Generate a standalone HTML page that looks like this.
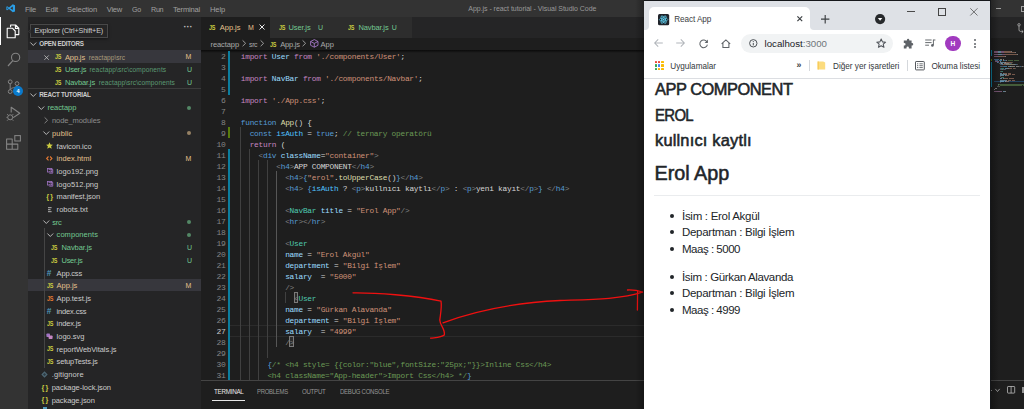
<!DOCTYPE html>
<html lang="tr"><head><meta charset="utf-8"><title>React App</title>
<style>
html,body{margin:0;padding:0;}
body{width:1024px;height:409px;overflow:hidden;position:relative;background:#1e1e1e;font-family:"Liberation Sans", sans-serif;}
body>div,body>span,body>svg{position:absolute;}
span{white-space:pre;}
svg{overflow:visible;}
</style></head><body>
<div style="left:0.00px;top:0.00px;width:1024.00px;height:17.30px;background:#333333;"></div>
<div style="left:0.00px;top:17.30px;width:28.00px;height:391.70px;background:#333333;"></div>
<div style="left:28.00px;top:17.30px;width:173.10px;height:391.70px;background:#252526;"></div>
<div style="left:201.10px;top:17.30px;width:822.90px;height:20.40px;background:#252526;"></div>
<svg style="left:5.60px;top:4.20px;" width="9.30" height="8.60" viewBox="0 0 10 10" preserveAspectRatio="none"><path d="M7.3 0.3 L3.2 4.1 1.3 2.7 0.4 3.1 0.4 6.9 1.3 7.3 3.2 5.9 7.3 9.7 9.7 8.6 9.7 1.4 Z M7.3 3 L7.3 7 4.6 5 Z M1.4 3.9 L2.5 5 1.4 6.1 Z" fill="#2a9ee6" fill-rule="evenodd"/></svg>
<span style="left:25.00px;top:5px;font-size:7.6px;line-height:9px;color:#a0a0a0;letter-spacing:-0.312px;">File</span>
<span style="left:45.50px;top:5px;font-size:7.6px;line-height:9px;color:#a0a0a0;letter-spacing:-0.148px;">Edit</span>
<span style="left:67.00px;top:5px;font-size:7.6px;line-height:9px;color:#a0a0a0;letter-spacing:-0.139px;">Selection</span>
<span style="left:106.75px;top:5px;font-size:7.6px;line-height:9px;color:#a0a0a0;letter-spacing:-0.270px;">View</span>
<span style="left:132.00px;top:5px;font-size:7.6px;line-height:9px;color:#a0a0a0;letter-spacing:-0.342px;transform:scaleX(0.9253);transform-origin:0 0;">Go</span>
<span style="left:150.75px;top:5px;font-size:7.6px;line-height:9px;color:#a0a0a0;letter-spacing:-0.342px;transform:scaleX(0.9488);transform-origin:0 0;">Run</span>
<span style="left:173.00px;top:5px;font-size:7.6px;line-height:9px;color:#a0a0a0;letter-spacing:-0.213px;">Terminal</span>
<span style="left:210.00px;top:5px;font-size:7.6px;line-height:9px;color:#a0a0a0;letter-spacing:-0.156px;">Help</span>
<span style="left:468.30px;top:5px;font-size:7.0px;line-height:7px;color:#9a9a9a;letter-spacing:-0.039px;">App.js - react tutorial - Visual Studio Code</span>
<div style="left:0.00px;top:17.30px;width:1.20px;height:27.70px;background:#ffffff;"></div>
<svg style="left:5.90px;top:23.50px;" width="14.00" height="15.00" viewBox="0 0 14 15"><path d="M4.6 3.2 V1 H9.6 L12.8 4.2 V10.6 H9.2 M9.4 1 V4.4 H12.8" fill="none" stroke="#ffffff" stroke-width="1.1" stroke-linejoin="round"/><path d="M1.2 4.2 H6.4 L9.2 7 V13.8 H1.2 Z" fill="none" stroke="#ffffff" stroke-width="1.1" stroke-linejoin="round"/></svg>
<svg style="left:7.00px;top:51.50px;" width="14.00" height="15.00" viewBox="0 0 14 15"><circle cx="8.6" cy="5.4" r="4.1" fill="none" stroke="#858585" stroke-width="1.1"/><path d="M5.8 8.6 L1 14" stroke="#858585" stroke-width="1.2" fill="none"/></svg>
<svg style="left:7.00px;top:79.00px;" width="14.00" height="16.00" viewBox="0 0 14 16"><circle cx="3.2" cy="2.8" r="1.9" fill="none" stroke="#858585" stroke-width="1"/><circle cx="3.2" cy="12.6" r="1.9" fill="none" stroke="#858585" stroke-width="1"/><circle cx="10" cy="4.6" r="1.9" fill="none" stroke="#858585" stroke-width="1"/><path d="M3.2 4.7 V10.7 M10 6.5 C10 9 3.2 8.4 3.2 10.7" fill="none" stroke="#858585" stroke-width="1"/></svg>
<div style="left:13px;top:86.3px;width:10px;height:10px;border-radius:5px;background:#0a7acc;"></div>
<span style="left:16.50px;top:88px;font-size:5.6px;line-height:6px;color:#ffffff;font-weight:700;">4</span>
<svg style="left:6.30px;top:106.40px;" width="15.00" height="16.00" viewBox="0 0 15 16"><path d="M5.2 6.5 V1.2 L13.8 7.2 L7.6 11.4" fill="none" stroke="#858585" stroke-width="1.1" stroke-linejoin="round"/><circle cx="4.2" cy="11.3" r="2.5" fill="none" stroke="#858585" stroke-width="1"/><path d="M1 8 L2.4 9.4 M7.4 8 L6 9.4 M0.4 11.4 H1.7 M6.7 11.4 H8 M1 14.8 L2.4 13.3 M7.4 14.8 L6 13.3" stroke="#858585" stroke-width="0.8" fill="none"/></svg>
<svg style="left:6.40px;top:134.60px;" width="15.00" height="15.00" viewBox="0 0 15 15"><path d="M0.6 3.9 H6.2 V9.1 H11.8 V14.3 H0.6 Z M0.6 9.1 H6.2 V14.3" fill="none" stroke="#858585" stroke-width="1.05" stroke-linejoin="round"/><rect x="8.8" y="0.6" width="5.6" height="5.4" fill="none" stroke="#858585" stroke-width="1.05"/></svg>
<span style="left:183.50px;top:22px;font-size:9px;line-height:10px;color:#c5c5c5;font-weight:700;">···</span>
<div style="left:29.6px;top:24px;width:78.6px;height:14px;background:#252526;border:0.6px solid #484848;box-sizing:border-box;box-shadow:0 1px 3px rgba(0,0,0,.45);"></div>
<svg style="left:27.60px;top:28.60px;" width="2.60" height="5.00" viewBox="0 0 2.6 5"><path d="M2.6 0.2 L0.5 2.5 L2.6 4.8" fill="#252526" stroke="#484848" stroke-width="0.5"/></svg>
<span style="left:34.50px;top:26px;font-size:7.2px;line-height:9px;color:#cccccc;letter-spacing:-0.165px;">Explorer (Ctrl+Shift+E)</span>
<svg style="left:30.20px;top:41.05px;" width="6.60" height="6.00" viewBox="0 0 6.6 6"><path d="M0.4 1.5 L3.3 4.5 L6.2 1.5" fill="none" stroke="#c5c5c5" stroke-width="0.9"/></svg>
<span style="left:39.25px;top:40px;font-size:6.3px;line-height:7px;color:#cccccc;font-weight:700;letter-spacing:-0.249px;">OPEN EDITORS</span>
<div style="left:28.00px;top:50.20px;width:173.10px;height:12.70px;background:#37373d;"></div>
<svg style="left:43.70px;top:54.55px;" width="5.20" height="5.20" viewBox="0 0 5.2 5.2"><path d="M0.4 0.4 L4.8 4.8 M4.8 0.4 L0.4 4.8" stroke="#cccccc" stroke-width="0.75"/></svg>
<span style="left:54.50px;top:53px;font-size:7.0px;line-height:7px;color:#cbcb41;font-weight:700;letter-spacing:-0.315px;transform:scaleX(0.7816);transform-origin:0 0;">JS</span>
<span style="left:65.00px;top:53px;font-size:7.5px;line-height:9px;color:#e2c08d;letter-spacing:-0.143px;">App.js</span>
<span style="left:88.75px;top:54px;font-size:6.6px;line-height:7px;color:#a89a7c;letter-spacing:-0.004px;">reactapp\src</span>
<span style="left:185.50px;top:53px;font-size:7.0px;line-height:7px;color:#e2c08d;">M</span>
<span style="left:54.50px;top:66px;font-size:7.0px;line-height:7px;color:#cbcb41;font-weight:700;letter-spacing:-0.315px;transform:scaleX(0.7816);transform-origin:0 0;">JS</span>
<span style="left:65.00px;top:65px;font-size:7.5px;line-height:9px;color:#73c991;letter-spacing:-0.239px;">User.js</span>
<span style="left:89.50px;top:66px;font-size:6.6px;line-height:7px;color:#5c9a73;letter-spacing:0.118px;">reactapp\src\components</span>
<span style="left:187.00px;top:66px;font-size:7.0px;line-height:7px;color:#73c991;">U</span>
<span style="left:54.50px;top:79px;font-size:7.0px;line-height:7px;color:#cbcb41;font-weight:700;letter-spacing:-0.315px;transform:scaleX(0.7816);transform-origin:0 0;">JS</span>
<span style="left:65.00px;top:78px;font-size:7.5px;line-height:9px;color:#73c991;letter-spacing:-0.141px;">Navbar.js</span>
<span style="left:98.75px;top:79px;font-size:6.6px;line-height:7px;color:#5c9a73;letter-spacing:0.096px;">reactapp\src\components</span>
<span style="left:187.00px;top:79px;font-size:7.0px;line-height:7px;color:#73c991;">U</span>
<div style="left:28.00px;top:88.30px;width:173.10px;height:0.60px;background:#3c3c3c;"></div>
<svg style="left:30.20px;top:91.85px;" width="6.60" height="6.00" viewBox="0 0 6.6 6"><path d="M0.4 1.5 L3.3 4.5 L6.2 1.5" fill="none" stroke="#c5c5c5" stroke-width="0.9"/></svg>
<span style="left:39.25px;top:91px;font-size:6.3px;line-height:7px;color:#cccccc;font-weight:700;letter-spacing:-0.279px;">REACT TUTORIAL</span>
<svg style="left:38.20px;top:104.55px;" width="6.60" height="6.00" viewBox="0 0 6.6 6"><path d="M0.4 1.5 L3.3 4.5 L6.2 1.5" fill="none" stroke="#c5c5c5" stroke-width="0.9"/></svg>
<span style="left:47.50px;top:103px;font-size:7.5px;line-height:9px;color:#73c991;letter-spacing:-0.055px;">reactapp</span>
<div style="left:186.8px;top:105.95px;width:4px;height:4px;border-radius:2px;background:#73c991;opacity:.6"></div>
<svg style="left:42.80px;top:117.35px;" width="6.00" height="6.60" viewBox="0 0 6 6.6"><path d="M1.6 0.4 L4.6 3.3 L1.6 6.2" fill="none" stroke="#8c8c8c" stroke-width="0.9"/></svg>
<span style="left:52.00px;top:116px;font-size:7.5px;line-height:9px;color:#8c8c8c;letter-spacing:-0.060px;">node_modules</span>
<svg style="left:42.50px;top:129.95px;" width="6.60" height="6.00" viewBox="0 0 6.6 6"><path d="M0.4 1.5 L3.3 4.5 L6.2 1.5" fill="none" stroke="#c5c5c5" stroke-width="0.9"/></svg>
<span style="left:52.00px;top:129px;font-size:7.5px;line-height:9px;color:#e2c08d;letter-spacing:0.148px;">public</span>
<div style="left:186.8px;top:131.35px;width:4px;height:4px;border-radius:2px;background:#e2c08d;opacity:.6"></div>
<svg style="left:46.30px;top:142.45px;" width="7.00" height="7.00" viewBox="0 0 7 7"><path d="M3.5 0.3 L4.5 2.5 L6.9 2.7 L5.1 4.3 L5.7 6.7 L3.5 5.4 L1.3 6.7 L1.9 4.3 L0.1 2.7 L2.5 2.5 Z" fill="#cbcb41"/></svg>
<span style="left:56.60px;top:142px;font-size:7.5px;line-height:9px;color:#cccccc;letter-spacing:-0.040px;">favicon.ico</span>
<svg style="left:46.20px;top:155.65px;" width="6.60" height="4.80" viewBox="0 0 6.6 4.8"><path d="M2.5 0.5 L0.7 2.4 L2.5 4.3 M4.1 0.5 L5.9 2.4 L4.1 4.3" fill="none" stroke="#e37933" stroke-width="1.15"/></svg>
<span style="left:56.60px;top:154px;font-size:7.5px;line-height:9px;color:#e2c08d;letter-spacing:0.046px;">index.html</span>
<span style="left:185.50px;top:155px;font-size:7.0px;line-height:7px;color:#e2c08d;">M</span>
<svg style="left:46.50px;top:168.15px;" width="6.20" height="5.70" viewBox="0 0 7 6.4"><rect x="0.5" y="0.5" width="5" height="4" fill="none" stroke="#a074c4" stroke-width="0.9"/><path d="M1.8 1.6 H6.5 V5.9 H2.6" fill="none" stroke="#a074c4" stroke-width="0.9"/><path d="M2.4 4.6 L3.8 3 L5 4.2 L6 3.4" fill="none" stroke="#a074c4" stroke-width="0.7"/></svg>
<span style="left:56.60px;top:167px;font-size:7.5px;line-height:9px;color:#cccccc;letter-spacing:0.032px;">logo192.png</span>
<svg style="left:46.50px;top:180.85px;" width="6.20" height="5.70" viewBox="0 0 7 6.4"><rect x="0.5" y="0.5" width="5" height="4" fill="none" stroke="#a074c4" stroke-width="0.9"/><path d="M1.8 1.6 H6.5 V5.9 H2.6" fill="none" stroke="#a074c4" stroke-width="0.9"/><path d="M2.4 4.6 L3.8 3 L5 4.2 L6 3.4" fill="none" stroke="#a074c4" stroke-width="0.7"/></svg>
<span style="left:56.60px;top:180px;font-size:7.5px;line-height:9px;color:#cccccc;letter-spacing:0.032px;">logo512.png</span>
<span style="left:46.30px;top:192px;font-size:7.2px;line-height:9px;color:#cbcb41;font-weight:700;letter-spacing:1.1px;">{}</span>
<span style="left:56.60px;top:192px;font-size:7.5px;line-height:9px;color:#cccccc;letter-spacing:-0.061px;">manifest.json</span>
<svg style="left:48.20px;top:206.55px;" width="4.00" height="5.40" viewBox="0 0 4 5.4"><path d="M0 0.7 H3.6 M0 2.7 H2.6 M0 4.7 H3.6" stroke="#c5c5c5" stroke-width="0.9"/></svg>
<span style="left:56.60px;top:205px;font-size:7.5px;line-height:9px;color:#cccccc;letter-spacing:0.054px;">robots.txt</span>
<svg style="left:42.50px;top:218.85px;" width="6.60" height="6.00" viewBox="0 0 6.6 6"><path d="M0.4 1.5 L3.3 4.5 L6.2 1.5" fill="none" stroke="#c5c5c5" stroke-width="0.9"/></svg>
<span style="left:52.20px;top:218px;font-size:7.5px;line-height:9px;color:#73c991;letter-spacing:-0.233px;">src</span>
<div style="left:186.8px;top:220.25px;width:4px;height:4px;border-radius:2px;background:#73c991;opacity:.6"></div>
<svg style="left:47.30px;top:231.55px;" width="6.60" height="6.00" viewBox="0 0 6.6 6"><path d="M0.4 1.5 L3.3 4.5 L6.2 1.5" fill="none" stroke="#c5c5c5" stroke-width="0.9"/></svg>
<span style="left:56.60px;top:230px;font-size:7.5px;line-height:9px;color:#73c991;letter-spacing:0.054px;">components</span>
<div style="left:186.8px;top:232.95px;width:4px;height:4px;border-radius:2px;background:#73c991;opacity:.6"></div>
<span style="left:51.00px;top:244px;font-size:7.0px;line-height:7px;color:#cbcb41;font-weight:700;letter-spacing:-0.315px;transform:scaleX(0.7816);transform-origin:0 0;">JS</span>
<span style="left:61.50px;top:243px;font-size:7.5px;line-height:9px;color:#73c991;letter-spacing:-0.085px;">Navbar.js</span>
<span style="left:187.00px;top:244px;font-size:7.0px;line-height:7px;color:#73c991;">U</span>
<span style="left:51.00px;top:257px;font-size:7.0px;line-height:7px;color:#cbcb41;font-weight:700;letter-spacing:-0.315px;transform:scaleX(0.7816);transform-origin:0 0;">JS</span>
<span style="left:61.50px;top:256px;font-size:7.5px;line-height:9px;color:#73c991;letter-spacing:-0.275px;">User.js</span>
<span style="left:187.00px;top:257px;font-size:7.0px;line-height:7px;color:#73c991;">U</span>
<span style="left:46.80px;top:268px;font-size:8.4px;line-height:10px;color:#519aba;font-weight:700;">#</span>
<span style="left:56.60px;top:269px;font-size:7.5px;line-height:9px;color:#cccccc;letter-spacing:-0.184px;">App.css</span>
<div style="left:28.00px;top:278.80px;width:173.10px;height:12.70px;background:#37373d;"></div>
<span style="left:46.50px;top:282px;font-size:7.0px;line-height:7px;color:#cbcb41;font-weight:700;letter-spacing:-0.315px;transform:scaleX(0.7816);transform-origin:0 0;">JS</span>
<span style="left:56.60px;top:281px;font-size:7.5px;line-height:9px;color:#e2c08d;letter-spacing:-0.027px;">App.js</span>
<span style="left:185.50px;top:282px;font-size:7.0px;line-height:7px;color:#e2c08d;">M</span>
<span style="left:46.50px;top:295px;font-size:7.0px;line-height:7px;color:#e37933;font-weight:700;letter-spacing:-0.315px;transform:scaleX(0.7816);transform-origin:0 0;">JS</span>
<span style="left:56.60px;top:294px;font-size:7.5px;line-height:9px;color:#cccccc;letter-spacing:-0.057px;">App.test.js</span>
<span style="left:46.80px;top:306px;font-size:8.4px;line-height:10px;color:#519aba;font-weight:700;">#</span>
<span style="left:56.60px;top:307px;font-size:7.5px;line-height:9px;color:#cccccc;letter-spacing:-0.163px;">index.css</span>
<span style="left:46.50px;top:320px;font-size:7.0px;line-height:7px;color:#cbcb41;font-weight:700;letter-spacing:-0.315px;transform:scaleX(0.7816);transform-origin:0 0;">JS</span>
<span style="left:56.60px;top:319px;font-size:7.5px;line-height:9px;color:#cccccc;letter-spacing:-0.130px;">index.js</span>
<svg style="left:46.30px;top:333.35px;" width="7.00" height="6.40" viewBox="0 0 7 6.4"><rect x="0.4" y="0.4" width="3.6" height="3.6" rx="0.8" fill="#a074c4"/><rect x="2.6" y="2.4" width="4" height="3.6" rx="0.8" fill="#c586c0"/></svg>
<span style="left:56.60px;top:332px;font-size:7.5px;line-height:9px;color:#cccccc;letter-spacing:-0.005px;">logo.svg</span>
<span style="left:46.50px;top:345px;font-size:7.0px;line-height:7px;color:#cbcb41;font-weight:700;letter-spacing:-0.315px;transform:scaleX(0.7816);transform-origin:0 0;">JS</span>
<span style="left:56.60px;top:345px;font-size:7.5px;line-height:9px;color:#cccccc;letter-spacing:-0.033px;">reportWebVitals.js</span>
<span style="left:46.50px;top:358px;font-size:7.0px;line-height:7px;color:#cbcb41;font-weight:700;letter-spacing:-0.315px;transform:scaleX(0.7816);transform-origin:0 0;">JS</span>
<span style="left:56.60px;top:357px;font-size:7.5px;line-height:9px;color:#cccccc;letter-spacing:-0.174px;">setupTests.js</span>
<svg style="left:41.20px;top:370.75px;" width="7.00" height="7.00" viewBox="0 0 7 7"><path d="M3.5 0.3 L6.7 3.5 L3.5 6.7 L0.3 3.5 Z" fill="#4d6673"/><path d="M3.5 2 L5 3.5 L3.5 5 L2 3.5 Z" fill="#2c3a42"/></svg>
<span style="left:51.70px;top:370px;font-size:7.5px;line-height:9px;color:#cccccc;letter-spacing:0.124px;">.gitignore</span>
<span style="left:41.60px;top:383px;font-size:7.2px;line-height:9px;color:#cbcb41;font-weight:700;letter-spacing:1.1px;">{}</span>
<span style="left:51.70px;top:383px;font-size:7.5px;line-height:9px;color:#cccccc;letter-spacing:-0.044px;">package-lock.json</span>
<span style="left:41.60px;top:395px;font-size:7.2px;line-height:9px;color:#cbcb41;font-weight:700;letter-spacing:1.1px;">{}</span>
<span style="left:51.70px;top:396px;font-size:7.5px;line-height:9px;color:#cccccc;letter-spacing:-0.096px;">package.json</span>
<div style="left:44.00px;top:228.00px;width:0.60px;height:139.70px;background:#454545;"></div>
<div style="left:42.50px;top:407.00px;width:4.00px;height:2.00px;background:#519aba;"></div>
<div style="left:201.10px;top:17.30px;width:68.65px;height:20.40px;background:#1e1e1e;"></div>
<div style="left:270.20px;top:17.30px;width:68.50px;height:20.40px;background:#2d2d2d;"></div>
<div style="left:339.40px;top:17.30px;width:72.70px;height:20.40px;background:#2d2d2d;"></div>
<span style="left:209.00px;top:24px;font-size:7.0px;line-height:7px;color:#cbcb41;font-weight:700;letter-spacing:-0.315px;transform:scaleX(0.7816);transform-origin:0 0;">JS</span>
<span style="left:219.75px;top:23px;font-size:7.5px;line-height:9px;color:#e2c08d;letter-spacing:-0.018px;">App.js</span>
<span style="left:248.00px;top:24px;font-size:7.0px;line-height:7px;color:#e2c08d;">M</span>
<svg style="left:258.60px;top:23.80px;" width="6.00" height="6.00" viewBox="0 0 6 6"><path d="M0.5 0.5 L5.5 5.5 M5.5 0.5 L0.5 5.5" stroke="#f0f0f0" stroke-width="0.95"/></svg>
<span style="left:278.50px;top:24px;font-size:7.0px;line-height:7px;color:#cbcb41;font-weight:700;letter-spacing:-0.315px;transform:scaleX(0.7816);transform-origin:0 0;">JS</span>
<span style="left:288.50px;top:23px;font-size:7.5px;line-height:9px;color:#73c991;letter-spacing:-0.132px;">User.js</span>
<span style="left:318.00px;top:24px;font-size:7.0px;line-height:7px;color:#73c991;">U</span>
<span style="left:348.00px;top:24px;font-size:7.0px;line-height:7px;color:#cbcb41;font-weight:700;letter-spacing:-0.315px;transform:scaleX(0.7816);transform-origin:0 0;">JS</span>
<span style="left:358.50px;top:23px;font-size:7.5px;line-height:9px;color:#73c991;letter-spacing:-0.141px;">Navbar.js</span>
<span style="left:391.75px;top:24px;font-size:7.0px;line-height:7px;color:#73c991;">U</span>
<span style="left:210.50px;top:40px;font-size:7.5px;line-height:9px;color:#a9a9a9;letter-spacing:-0.086px;">reactapp</span>
<svg style="left:240.90px;top:40.20px;" width="6.00" height="6.60" viewBox="0 0 6 6.6"><path d="M1.6 0.4 L4.6 3.3 L1.6 6.2" fill="none" stroke="#a9a9a9" stroke-width="0.9"/></svg>
<span style="left:249.00px;top:40px;font-size:7.5px;line-height:9px;color:#a9a9a9;letter-spacing:-0.337px;transform:scaleX(0.9179);transform-origin:0 0;">src</span>
<svg style="left:258.90px;top:40.20px;" width="6.00" height="6.60" viewBox="0 0 6 6.6"><path d="M1.6 0.4 L4.6 3.3 L1.6 6.2" fill="none" stroke="#a9a9a9" stroke-width="0.9"/></svg>
<span style="left:269.75px;top:41px;font-size:7.0px;line-height:7px;color:#cbcb41;font-weight:700;letter-spacing:-0.315px;transform:scaleX(0.7816);transform-origin:0 0;">JS</span>
<span style="left:280.25px;top:40px;font-size:7.5px;line-height:9px;color:#a9a9a9;letter-spacing:-0.227px;">App.js</span>
<svg style="left:301.40px;top:40.20px;" width="6.00" height="6.60" viewBox="0 0 6 6.6"><path d="M1.6 0.4 L4.6 3.3 L1.6 6.2" fill="none" stroke="#a9a9a9" stroke-width="0.9"/></svg>
<svg style="left:309.50px;top:39.10px;" width="8.60" height="8.80" viewBox="0 0 8.6 8.8"><path d="M4.3 0.6 L8 2.5 V6.3 L4.3 8.2 L0.6 6.3 V2.5 Z M0.6 2.5 L4.3 4.4 L8 2.5 M4.3 4.4 V8.2" fill="none" stroke="#b180d7" stroke-width="0.8" stroke-linejoin="round"/></svg>
<span style="left:320.50px;top:40px;font-size:7.5px;line-height:9px;color:#a9a9a9;letter-spacing:0.047px;">App</span>
<div style="left:201.1px;top:50.4px;width:443.4px;height:3px;background:linear-gradient(#000000aa,#00000000);"></div>
<div style="left:229.50px;top:325.10px;width:414.50px;height:0.70px;background:#2b2b2b;"></div>
<div style="left:229.50px;top:335.55px;width:414.50px;height:0.70px;background:#2b2b2b;"></div>
<div style="left:228.10px;top:50.60px;width:1.80px;height:43.92px;background:#0c7d9d;"></div>
<div style="left:228.10px;top:127.46px;width:1.80px;height:10.98px;background:#587c0c;"></div>
<div style="left:228.10px;top:149.42px;width:1.80px;height:252.54px;background:#0c7d9d;"></div>
<div style="left:240.30px;top:127.46px;width:0.60px;height:274.50px;background:#404040;"></div>
<div style="left:249.17px;top:149.42px;width:0.60px;height:252.54px;background:#404040;"></div>
<div style="left:258.05px;top:160.40px;width:0.60px;height:241.56px;background:#404040;"></div>
<div style="left:266.92px;top:160.40px;width:0.60px;height:197.64px;background:#404040;"></div>
<div style="left:275.80px;top:171.38px;width:0.60px;height:175.68px;background:#565656;"></div>
<div style="left:284.67px;top:292.16px;width:0.60px;height:10.98px;background:#404040;"></div>
<div style="left:293.74px;top:292.36px;width:4.44px;height:10.38px;border:0.6px solid #7a7a7a;box-sizing:border-box;background:#ffffff10;"></div>
<div style="left:289.31px;top:336.28px;width:4.44px;height:10.38px;border:0.6px solid #7a7a7a;box-sizing:border-box;background:#ffffff10;"></div>
<span style="left:220.96px;top:52px;font-size:8.0px;line-height:9px;color:#858585;font-family:'Liberation Mono', monospace;letter-spacing:-0.364px;">2</span>
<span style="left:240.80px;top:53px;font-size:7.8px;line-height:8px;color:#d4d4d4;font-family:'Liberation Mono', monospace;letter-spacing:-0.244px;"><span style="color:#c586c0">import</span><span style="color:#9cdcfe"> User</span><span style="color:#c586c0"> from</span><span style="color:#ce9178"> './components/User'</span><span style="color:#d4d4d4">;</span></span>
<span style="left:220.96px;top:63px;font-size:8.0px;line-height:9px;color:#858585;font-family:'Liberation Mono', monospace;letter-spacing:-0.364px;">3</span>
<span style="left:220.96px;top:74px;font-size:8.0px;line-height:9px;color:#858585;font-family:'Liberation Mono', monospace;letter-spacing:-0.364px;">4</span>
<span style="left:240.80px;top:75px;font-size:7.8px;line-height:8px;color:#d4d4d4;font-family:'Liberation Mono', monospace;letter-spacing:-0.244px;"><span style="color:#c586c0">import</span><span style="color:#9cdcfe"> NavBar</span><span style="color:#c586c0"> from</span><span style="color:#ce9178"> './components/Navbar'</span><span style="color:#d4d4d4">;</span></span>
<span style="left:220.96px;top:85px;font-size:8.0px;line-height:9px;color:#858585;font-family:'Liberation Mono', monospace;letter-spacing:-0.364px;">5</span>
<span style="left:220.96px;top:96px;font-size:8.0px;line-height:9px;color:#858585;font-family:'Liberation Mono', monospace;letter-spacing:-0.364px;">6</span>
<span style="left:240.80px;top:97px;font-size:7.8px;line-height:8px;color:#d4d4d4;font-family:'Liberation Mono', monospace;letter-spacing:-0.244px;"><span style="color:#c586c0">import</span><span style="color:#ce9178"> './App.css'</span><span style="color:#d4d4d4">;</span></span>
<span style="left:220.96px;top:107px;font-size:8.0px;line-height:9px;color:#858585;font-family:'Liberation Mono', monospace;letter-spacing:-0.364px;">7</span>
<span style="left:220.96px;top:118px;font-size:8.0px;line-height:9px;color:#858585;font-family:'Liberation Mono', monospace;letter-spacing:-0.364px;">8</span>
<span style="left:240.80px;top:119px;font-size:7.8px;line-height:8px;color:#d4d4d4;font-family:'Liberation Mono', monospace;letter-spacing:-0.244px;"><span style="color:#569cd6">function</span><span style="color:#dcdcaa"> App</span><span style="color:#d4d4d4">() {</span></span>
<span style="left:220.96px;top:129px;font-size:8.0px;line-height:9px;color:#858585;font-family:'Liberation Mono', monospace;letter-spacing:-0.364px;">9</span>
<span style="left:249.67px;top:130px;font-size:7.8px;line-height:8px;color:#d4d4d4;font-family:'Liberation Mono', monospace;letter-spacing:-0.244px;"><span style="color:#569cd6">const</span><span style="color:#4fc1ff"> isAuth</span><span style="color:#d4d4d4"> = </span><span style="color:#569cd6">true</span><span style="color:#d4d4d4">; </span><span style="color:#6a9955">// ternary operatörü</span></span>
<span style="left:216.53px;top:140px;font-size:8.0px;line-height:9px;color:#858585;font-family:'Liberation Mono', monospace;letter-spacing:-0.364px;">10</span>
<span style="left:249.67px;top:141px;font-size:7.8px;line-height:8px;color:#d4d4d4;font-family:'Liberation Mono', monospace;letter-spacing:-0.244px;"><span style="color:#c586c0">return</span><span style="color:#d4d4d4"> (</span></span>
<span style="left:216.53px;top:151px;font-size:8.0px;line-height:9px;color:#858585;font-family:'Liberation Mono', monospace;letter-spacing:-0.364px;">11</span>
<span style="left:258.55px;top:152px;font-size:7.8px;line-height:8px;color:#d4d4d4;font-family:'Liberation Mono', monospace;letter-spacing:-0.244px;"><span style="color:#808080">&lt;</span><span style="color:#569cd6">div</span><span style="color:#9cdcfe"> className</span><span style="color:#d4d4d4">=</span><span style="color:#ce9178">"container"</span><span style="color:#808080">&gt;</span></span>
<span style="left:216.53px;top:162px;font-size:8.0px;line-height:9px;color:#858585;font-family:'Liberation Mono', monospace;letter-spacing:-0.364px;">12</span>
<span style="left:276.30px;top:163px;font-size:7.8px;line-height:8px;color:#d4d4d4;font-family:'Liberation Mono', monospace;letter-spacing:-0.244px;"><span style="color:#808080">&lt;</span><span style="color:#569cd6">h4</span><span style="color:#808080">&gt;</span><span style="color:#d4d4d4">APP COMPONENT</span><span style="color:#808080">&lt;/</span><span style="color:#569cd6">h4</span><span style="color:#808080">&gt;</span></span>
<span style="left:216.53px;top:173px;font-size:8.0px;line-height:9px;color:#858585;font-family:'Liberation Mono', monospace;letter-spacing:-0.364px;">13</span>
<span style="left:285.17px;top:174px;font-size:7.8px;line-height:8px;color:#d4d4d4;font-family:'Liberation Mono', monospace;letter-spacing:-0.244px;"><span style="color:#808080">&lt;</span><span style="color:#569cd6">h4</span><span style="color:#808080">&gt;</span><span style="color:#569cd6">{</span><span style="color:#ce9178">"erol"</span><span style="color:#d4d4d4">.</span><span style="color:#dcdcaa">toUpperCase</span><span style="color:#d4d4d4">()</span><span style="color:#569cd6">}</span><span style="color:#808080">&lt;/</span><span style="color:#569cd6">h4</span><span style="color:#808080">&gt;</span></span>
<span style="left:216.53px;top:184px;font-size:8.0px;line-height:9px;color:#858585;font-family:'Liberation Mono', monospace;letter-spacing:-0.364px;">14</span>
<span style="left:285.17px;top:185px;font-size:7.8px;line-height:8px;color:#d4d4d4;font-family:'Liberation Mono', monospace;letter-spacing:-0.244px;"><span style="color:#808080">&lt;</span><span style="color:#569cd6">h4</span><span style="color:#808080">&gt;</span><span style="color:#569cd6"> {</span><span style="color:#4fc1ff">isAuth</span><span style="color:#d4d4d4"> ? </span><span style="color:#808080">&lt;</span><span style="color:#569cd6">p</span><span style="color:#808080">&gt;</span><span style="color:#d4d4d4">kullnıcı kaytlı</span><span style="color:#808080">&lt;/</span><span style="color:#569cd6">p</span><span style="color:#808080">&gt;</span><span style="color:#d4d4d4"> : </span><span style="color:#808080">&lt;</span><span style="color:#569cd6">p</span><span style="color:#808080">&gt;</span><span style="color:#d4d4d4">yeni kayıt</span><span style="color:#808080">&lt;/</span><span style="color:#569cd6">p</span><span style="color:#808080">&gt;</span><span style="color:#569cd6">}</span><span style="color:#d4d4d4"> </span><span style="color:#808080">&lt;/</span><span style="color:#569cd6">h4</span><span style="color:#808080">&gt;</span></span>
<span style="left:216.53px;top:195px;font-size:8.0px;line-height:9px;color:#858585;font-family:'Liberation Mono', monospace;letter-spacing:-0.364px;">15</span>
<span style="left:216.53px;top:206px;font-size:8.0px;line-height:9px;color:#858585;font-family:'Liberation Mono', monospace;letter-spacing:-0.364px;">16</span>
<span style="left:285.17px;top:207px;font-size:7.8px;line-height:8px;color:#d4d4d4;font-family:'Liberation Mono', monospace;letter-spacing:-0.244px;"><span style="color:#808080">&lt;</span><span style="color:#4ec9b0">NavBar</span><span style="color:#9cdcfe"> title</span><span style="color:#d4d4d4"> = </span><span style="color:#ce9178">"Erol App"</span><span style="color:#808080">/&gt;</span></span>
<span style="left:216.53px;top:217px;font-size:8.0px;line-height:9px;color:#858585;font-family:'Liberation Mono', monospace;letter-spacing:-0.364px;">17</span>
<span style="left:285.17px;top:218px;font-size:7.8px;line-height:8px;color:#d4d4d4;font-family:'Liberation Mono', monospace;letter-spacing:-0.244px;"><span style="color:#808080">&lt;</span><span style="color:#569cd6">hr</span><span style="color:#808080">&gt;</span><span style="color:#808080">&lt;/</span><span style="color:#569cd6">hr</span><span style="color:#808080">&gt;</span></span>
<span style="left:216.53px;top:228px;font-size:8.0px;line-height:9px;color:#858585;font-family:'Liberation Mono', monospace;letter-spacing:-0.364px;">18</span>
<span style="left:216.53px;top:239px;font-size:8.0px;line-height:9px;color:#858585;font-family:'Liberation Mono', monospace;letter-spacing:-0.364px;">19</span>
<span style="left:285.17px;top:240px;font-size:7.8px;line-height:8px;color:#d4d4d4;font-family:'Liberation Mono', monospace;letter-spacing:-0.244px;"><span style="color:#808080">&lt;</span><span style="color:#4ec9b0">User</span></span>
<span style="left:216.53px;top:250px;font-size:8.0px;line-height:9px;color:#858585;font-family:'Liberation Mono', monospace;letter-spacing:-0.364px;">20</span>
<span style="left:285.17px;top:251px;font-size:7.8px;line-height:8px;color:#d4d4d4;font-family:'Liberation Mono', monospace;letter-spacing:-0.244px;"><span style="color:#9cdcfe">name</span><span style="color:#d4d4d4"> = </span><span style="color:#ce9178">"Erol Akgül"</span></span>
<span style="left:216.53px;top:261px;font-size:8.0px;line-height:9px;color:#858585;font-family:'Liberation Mono', monospace;letter-spacing:-0.364px;">21</span>
<span style="left:285.17px;top:262px;font-size:7.8px;line-height:8px;color:#d4d4d4;font-family:'Liberation Mono', monospace;letter-spacing:-0.244px;"><span style="color:#9cdcfe">department</span><span style="color:#d4d4d4"> = </span><span style="color:#ce9178">"Bilgi İşlem"</span></span>
<span style="left:216.53px;top:272px;font-size:8.0px;line-height:9px;color:#858585;font-family:'Liberation Mono', monospace;letter-spacing:-0.364px;">22</span>
<span style="left:285.17px;top:273px;font-size:7.8px;line-height:8px;color:#d4d4d4;font-family:'Liberation Mono', monospace;letter-spacing:-0.244px;"><span style="color:#9cdcfe">salary</span><span style="color:#d4d4d4">  = </span><span style="color:#ce9178">"5000"</span></span>
<span style="left:216.53px;top:283px;font-size:8.0px;line-height:9px;color:#858585;font-family:'Liberation Mono', monospace;letter-spacing:-0.364px;">23</span>
<span style="left:285.17px;top:284px;font-size:7.8px;line-height:8px;color:#d4d4d4;font-family:'Liberation Mono', monospace;letter-spacing:-0.244px;"><span style="color:#808080">/&gt;</span></span>
<span style="left:216.53px;top:294px;font-size:8.0px;line-height:9px;color:#858585;font-family:'Liberation Mono', monospace;letter-spacing:-0.364px;">24</span>
<span style="left:294.04px;top:295px;font-size:7.8px;line-height:8px;color:#d4d4d4;font-family:'Liberation Mono', monospace;letter-spacing:-0.244px;"><span style="color:#808080">&lt;</span><span style="color:#4ec9b0">User</span></span>
<span style="left:216.53px;top:305px;font-size:8.0px;line-height:9px;color:#858585;font-family:'Liberation Mono', monospace;letter-spacing:-0.364px;">25</span>
<span style="left:285.17px;top:306px;font-size:7.8px;line-height:8px;color:#d4d4d4;font-family:'Liberation Mono', monospace;letter-spacing:-0.244px;"><span style="color:#9cdcfe">name</span><span style="color:#d4d4d4"> = </span><span style="color:#ce9178">"Gürkan Alavanda"</span></span>
<span style="left:216.53px;top:316px;font-size:8.0px;line-height:9px;color:#858585;font-family:'Liberation Mono', monospace;letter-spacing:-0.364px;">26</span>
<span style="left:285.17px;top:317px;font-size:7.8px;line-height:8px;color:#d4d4d4;font-family:'Liberation Mono', monospace;letter-spacing:-0.244px;"><span style="color:#9cdcfe">department</span><span style="color:#d4d4d4"> = </span><span style="color:#ce9178">"Bilgi İşlem"</span></span>
<span style="left:216.53px;top:327px;font-size:8.0px;line-height:9px;color:#c6c6c6;font-family:'Liberation Mono', monospace;letter-spacing:-0.364px;">27</span>
<span style="left:285.17px;top:328px;font-size:7.8px;line-height:8px;color:#d4d4d4;font-family:'Liberation Mono', monospace;letter-spacing:-0.244px;"><span style="color:#9cdcfe">salary</span><span style="color:#d4d4d4">  = </span><span style="color:#ce9178">"4999"</span></span>
<span style="left:216.53px;top:338px;font-size:8.0px;line-height:9px;color:#858585;font-family:'Liberation Mono', monospace;letter-spacing:-0.364px;">28</span>
<span style="left:285.17px;top:339px;font-size:7.8px;line-height:8px;color:#d4d4d4;font-family:'Liberation Mono', monospace;letter-spacing:-0.244px;"><span style="color:#808080">/&gt;</span></span>
<span style="left:216.53px;top:349px;font-size:8.0px;line-height:9px;color:#858585;font-family:'Liberation Mono', monospace;letter-spacing:-0.364px;">29</span>
<span style="left:216.53px;top:360px;font-size:8.0px;line-height:9px;color:#858585;font-family:'Liberation Mono', monospace;letter-spacing:-0.364px;">30</span>
<span style="left:267.42px;top:361px;font-size:7.8px;line-height:8px;color:#d4d4d4;font-family:'Liberation Mono', monospace;letter-spacing:-0.244px;"><span style="color:#569cd6">{</span><span style="color:#6a9955">/* &lt;h4 style= {{color:"blue",fontSize:"25px;"}}&gt;Inline Css&lt;/h4&gt;</span></span>
<span style="left:216.53px;top:371px;font-size:8.0px;line-height:9px;color:#858585;font-family:'Liberation Mono', monospace;letter-spacing:-0.364px;">31</span>
<span style="left:267.42px;top:372px;font-size:7.8px;line-height:8px;color:#d4d4d4;font-family:'Liberation Mono', monospace;letter-spacing:-0.244px;"><span style="color:#6a9955">&lt;h4 className="App-header"&gt;Import Css&lt;/h4&gt; */</span><span style="color:#569cd6">}</span></span>
<div style="left:201.10px;top:380.10px;width:822.90px;height:30.00px;background:#1e1e1e;"></div>
<div style="left:201.10px;top:380.10px;width:822.90px;height:0.70px;background:#444444;"></div>
<span style="left:213.75px;top:388px;font-size:6.8px;line-height:7px;color:#e7e7e7;letter-spacing:-0.306px;transform:scaleX(0.9255);transform-origin:0 0;">TERMINAL</span>
<div style="left:212.20px;top:400.00px;width:32.60px;height:0.70px;background:#e7e7e7;"></div>
<span style="left:257.00px;top:388px;font-size:6.8px;line-height:7px;color:#969696;letter-spacing:-0.306px;transform:scaleX(0.8774);transform-origin:0 0;">PROBLEMS</span>
<span style="left:301.75px;top:388px;font-size:6.8px;line-height:7px;color:#969696;letter-spacing:-0.306px;transform:scaleX(0.8998);transform-origin:0 0;">OUTPUT</span>
<span style="left:339.50px;top:388px;font-size:6.8px;line-height:7px;color:#969696;letter-spacing:-0.306px;transform:scaleX(0.8903);transform-origin:0 0;">DEBUG CONSOLE</span>
<svg style="left:0.00px;top:0.00px;pointer-events:none;" width="1024.00" height="409.00" viewBox="0 0 1024 409"><g fill="none" stroke="#f01010" stroke-width="1.3" stroke-linecap="round" stroke-linejoin="round"><path d="M353 292.8 C375 292.5 415 295.5 441 301.2 C442 307 440.5 314 439.8 320 C440 326 445.5 329 444.3 335 C441 337.5 435 337.5 430.6 338.2"/><path d="M443 322.8 C480 309 520 302.5 560 300.5 C590 299.5 620 299.5 642.5 292.2"/><path d="M627.5 290 C633 289.8 638 290.5 642.5 292"/><path d="M637.6 291 L637.4 310"/></g></svg>
<div style="left:990.50px;top:0.00px;width:33.50px;height:17.30px;background:#333333;"></div>
<div style="left:990.50px;top:17.30px;width:33.50px;height:20.40px;background:#252526;"></div>
<div style="left:996.00px;top:8.20px;width:5.40px;height:0.70px;background:#a0a0a0;"></div>
<div style="left:1020.5px;top:5.5px;width:6px;height:6px;border:0.7px solid #a0a0a0;box-sizing:border-box;"></div>
<svg style="left:1016.50px;top:22.50px;" width="8.00" height="10.00" viewBox="0 0 8 10"><circle cx="2" cy="1.8" r="1.2" fill="none" stroke="#c5c5c5" stroke-width="0.7"/><path d="M2 3 V7 C2 8.5 4 8.6 6 8.6 M4.6 7.2 L6.2 8.6 L4.6 10" fill="none" stroke="#c5c5c5" stroke-width="0.7"/></svg>
<div style="left:991.20px;top:50.20px;width:1.30px;height:6.20px;background:#0c7d9d;"></div>
<div style="left:991.20px;top:59.00px;width:1.30px;height:1.60px;background:#587c0c;"></div>
<div style="left:991.20px;top:61.80px;width:1.30px;height:25.20px;background:#0c7d9d;"></div>
<div style="left:993.60px;top:80.56px;width:31.00px;height:1.00px;background:#264f78;opacity:.75;"></div>
<div style="left:994.30px;top:50.60px;width:3.47px;height:0.80px;background:#c586c0;opacity:.5;"></div>
<div style="left:998.35px;top:50.60px;width:2.31px;height:0.80px;background:#9cdcfe;opacity:.5;"></div>
<div style="left:1001.24px;top:50.60px;width:2.31px;height:0.80px;background:#c586c0;opacity:.5;"></div>
<div style="left:1004.13px;top:50.60px;width:6.94px;height:0.80px;background:#ce9178;opacity:.5;"></div>
<div style="left:1011.06px;top:50.60px;width:0.58px;height:0.80px;background:#d4d4d4;opacity:.5;"></div>
<div style="left:994.30px;top:51.76px;width:3.47px;height:0.80px;background:#c586c0;opacity:.5;"></div>
<div style="left:998.35px;top:51.76px;width:2.31px;height:0.80px;background:#9cdcfe;opacity:.5;"></div>
<div style="left:1001.24px;top:51.76px;width:2.31px;height:0.80px;background:#c586c0;opacity:.5;"></div>
<div style="left:1004.13px;top:51.76px;width:10.98px;height:0.80px;background:#ce9178;opacity:.5;"></div>
<div style="left:1015.11px;top:51.76px;width:0.58px;height:0.80px;background:#d4d4d4;opacity:.5;"></div>
<div style="left:994.30px;top:54.07px;width:3.47px;height:0.80px;background:#c586c0;opacity:.5;"></div>
<div style="left:998.35px;top:54.07px;width:3.47px;height:0.80px;background:#9cdcfe;opacity:.5;"></div>
<div style="left:1002.39px;top:54.07px;width:2.31px;height:0.80px;background:#c586c0;opacity:.5;"></div>
<div style="left:1005.28px;top:54.07px;width:12.14px;height:0.80px;background:#ce9178;opacity:.5;"></div>
<div style="left:1017.42px;top:54.07px;width:0.58px;height:0.80px;background:#d4d4d4;opacity:.5;"></div>
<div style="left:994.30px;top:56.38px;width:3.47px;height:0.80px;background:#c586c0;opacity:.5;"></div>
<div style="left:998.35px;top:56.38px;width:6.36px;height:0.80px;background:#ce9178;opacity:.5;"></div>
<div style="left:1004.70px;top:56.38px;width:0.58px;height:0.80px;background:#d4d4d4;opacity:.5;"></div>
<div style="left:994.30px;top:58.69px;width:4.62px;height:0.80px;background:#569cd6;opacity:.5;"></div>
<div style="left:999.50px;top:58.69px;width:1.73px;height:0.80px;background:#dcdcaa;opacity:.5;"></div>
<div style="left:1001.24px;top:58.69px;width:1.16px;height:0.80px;background:#d4d4d4;opacity:.5;"></div>
<div style="left:1002.97px;top:58.69px;width:0.58px;height:0.80px;background:#d4d4d4;opacity:.5;"></div>
<div style="left:995.46px;top:59.85px;width:2.89px;height:0.80px;background:#569cd6;opacity:.5;"></div>
<div style="left:998.92px;top:59.85px;width:3.47px;height:0.80px;background:#4fc1ff;opacity:.5;"></div>
<div style="left:1002.97px;top:59.85px;width:0.58px;height:0.80px;background:#d4d4d4;opacity:.5;"></div>
<div style="left:1004.13px;top:59.85px;width:2.31px;height:0.80px;background:#569cd6;opacity:.5;"></div>
<div style="left:1006.44px;top:59.85px;width:0.58px;height:0.80px;background:#d4d4d4;opacity:.5;"></div>
<div style="left:1007.59px;top:59.85px;width:1.16px;height:0.80px;background:#6a9955;opacity:.5;"></div>
<div style="left:1009.33px;top:59.85px;width:4.05px;height:0.80px;background:#6a9955;opacity:.5;"></div>
<div style="left:1013.95px;top:59.85px;width:5.20px;height:0.80px;background:#6a9955;opacity:.5;"></div>
<div style="left:995.46px;top:61.00px;width:3.47px;height:0.80px;background:#c586c0;opacity:.5;"></div>
<div style="left:999.50px;top:61.00px;width:0.58px;height:0.80px;background:#d4d4d4;opacity:.5;"></div>
<div style="left:996.61px;top:62.16px;width:0.58px;height:0.80px;background:#808080;opacity:.5;"></div>
<div style="left:997.19px;top:62.16px;width:1.73px;height:0.80px;background:#569cd6;opacity:.5;"></div>
<div style="left:999.50px;top:62.16px;width:5.20px;height:0.80px;background:#9cdcfe;opacity:.5;"></div>
<div style="left:1004.70px;top:62.16px;width:0.58px;height:0.80px;background:#d4d4d4;opacity:.5;"></div>
<div style="left:1005.28px;top:62.16px;width:6.36px;height:0.80px;background:#ce9178;opacity:.5;"></div>
<div style="left:1011.64px;top:62.16px;width:0.58px;height:0.80px;background:#808080;opacity:.5;"></div>
<div style="left:998.92px;top:63.32px;width:0.58px;height:0.80px;background:#808080;opacity:.5;"></div>
<div style="left:999.50px;top:63.32px;width:1.16px;height:0.80px;background:#569cd6;opacity:.5;"></div>
<div style="left:1000.66px;top:63.32px;width:0.58px;height:0.80px;background:#808080;opacity:.5;"></div>
<div style="left:1001.24px;top:63.32px;width:1.73px;height:0.80px;background:#d4d4d4;opacity:.5;"></div>
<div style="left:1003.55px;top:63.32px;width:5.20px;height:0.80px;background:#d4d4d4;opacity:.5;"></div>
<div style="left:1008.75px;top:63.32px;width:1.16px;height:0.80px;background:#808080;opacity:.5;"></div>
<div style="left:1009.91px;top:63.32px;width:1.16px;height:0.80px;background:#569cd6;opacity:.5;"></div>
<div style="left:1011.06px;top:63.32px;width:0.58px;height:0.80px;background:#808080;opacity:.5;"></div>
<div style="left:1000.08px;top:64.47px;width:0.58px;height:0.80px;background:#808080;opacity:.5;"></div>
<div style="left:1000.66px;top:64.47px;width:1.16px;height:0.80px;background:#569cd6;opacity:.5;"></div>
<div style="left:1001.81px;top:64.47px;width:0.58px;height:0.80px;background:#808080;opacity:.5;"></div>
<div style="left:1002.39px;top:64.47px;width:0.58px;height:0.80px;background:#569cd6;opacity:.5;"></div>
<div style="left:1002.97px;top:64.47px;width:3.47px;height:0.80px;background:#ce9178;opacity:.5;"></div>
<div style="left:1006.44px;top:64.47px;width:0.58px;height:0.80px;background:#d4d4d4;opacity:.5;"></div>
<div style="left:1007.02px;top:64.47px;width:6.36px;height:0.80px;background:#dcdcaa;opacity:.5;"></div>
<div style="left:1013.37px;top:64.47px;width:1.16px;height:0.80px;background:#d4d4d4;opacity:.5;"></div>
<div style="left:1014.53px;top:64.47px;width:0.58px;height:0.80px;background:#569cd6;opacity:.5;"></div>
<div style="left:1015.11px;top:64.47px;width:1.16px;height:0.80px;background:#808080;opacity:.5;"></div>
<div style="left:1016.26px;top:64.47px;width:1.16px;height:0.80px;background:#569cd6;opacity:.5;"></div>
<div style="left:1017.42px;top:64.47px;width:0.58px;height:0.80px;background:#808080;opacity:.5;"></div>
<div style="left:1000.08px;top:65.63px;width:0.58px;height:0.80px;background:#808080;opacity:.5;"></div>
<div style="left:1000.66px;top:65.63px;width:1.16px;height:0.80px;background:#569cd6;opacity:.5;"></div>
<div style="left:1001.81px;top:65.63px;width:0.58px;height:0.80px;background:#808080;opacity:.5;"></div>
<div style="left:1002.97px;top:65.63px;width:0.58px;height:0.80px;background:#569cd6;opacity:.5;"></div>
<div style="left:1003.55px;top:65.63px;width:3.47px;height:0.80px;background:#4fc1ff;opacity:.5;"></div>
<div style="left:1007.59px;top:65.63px;width:0.58px;height:0.80px;background:#d4d4d4;opacity:.5;"></div>
<div style="left:1008.75px;top:65.63px;width:0.58px;height:0.80px;background:#808080;opacity:.5;"></div>
<div style="left:1009.33px;top:65.63px;width:0.58px;height:0.80px;background:#569cd6;opacity:.5;"></div>
<div style="left:1009.91px;top:65.63px;width:0.58px;height:0.80px;background:#808080;opacity:.5;"></div>
<div style="left:1010.48px;top:65.63px;width:4.62px;height:0.80px;background:#d4d4d4;opacity:.5;"></div>
<div style="left:1015.69px;top:65.63px;width:3.47px;height:0.80px;background:#d4d4d4;opacity:.5;"></div>
<div style="left:1019.15px;top:65.63px;width:1.16px;height:0.80px;background:#808080;opacity:.5;"></div>
<div style="left:1020.31px;top:65.63px;width:0.58px;height:0.80px;background:#569cd6;opacity:.5;"></div>
<div style="left:1020.89px;top:65.63px;width:0.58px;height:0.80px;background:#808080;opacity:.5;"></div>
<div style="left:1022.04px;top:65.63px;width:0.58px;height:0.80px;background:#d4d4d4;opacity:.5;"></div>
<div style="left:1023.20px;top:65.63px;width:0.58px;height:0.80px;background:#808080;opacity:.5;"></div>
<div style="left:1023.78px;top:65.63px;width:0.22px;height:0.80px;background:#569cd6;opacity:.5;"></div>
<div style="left:1000.08px;top:67.94px;width:0.58px;height:0.80px;background:#808080;opacity:.5;"></div>
<div style="left:1000.66px;top:67.94px;width:3.47px;height:0.80px;background:#4ec9b0;opacity:.5;"></div>
<div style="left:1004.70px;top:67.94px;width:2.89px;height:0.80px;background:#9cdcfe;opacity:.5;"></div>
<div style="left:1008.17px;top:67.94px;width:0.58px;height:0.80px;background:#d4d4d4;opacity:.5;"></div>
<div style="left:1009.33px;top:67.94px;width:2.89px;height:0.80px;background:#ce9178;opacity:.5;"></div>
<div style="left:1012.80px;top:67.94px;width:2.31px;height:0.80px;background:#ce9178;opacity:.5;"></div>
<div style="left:1015.11px;top:67.94px;width:1.16px;height:0.80px;background:#808080;opacity:.5;"></div>
<div style="left:1000.08px;top:69.10px;width:0.58px;height:0.80px;background:#808080;opacity:.5;"></div>
<div style="left:1000.66px;top:69.10px;width:1.16px;height:0.80px;background:#569cd6;opacity:.5;"></div>
<div style="left:1001.81px;top:69.10px;width:0.58px;height:0.80px;background:#808080;opacity:.5;"></div>
<div style="left:1002.39px;top:69.10px;width:1.16px;height:0.80px;background:#808080;opacity:.5;"></div>
<div style="left:1003.55px;top:69.10px;width:1.16px;height:0.80px;background:#569cd6;opacity:.5;"></div>
<div style="left:1004.70px;top:69.10px;width:0.58px;height:0.80px;background:#808080;opacity:.5;"></div>
<div style="left:1000.08px;top:71.41px;width:0.58px;height:0.80px;background:#808080;opacity:.5;"></div>
<div style="left:1000.66px;top:71.41px;width:2.31px;height:0.80px;background:#4ec9b0;opacity:.5;"></div>
<div style="left:1000.08px;top:72.56px;width:2.31px;height:0.80px;background:#9cdcfe;opacity:.5;"></div>
<div style="left:1002.97px;top:72.56px;width:0.58px;height:0.80px;background:#d4d4d4;opacity:.5;"></div>
<div style="left:1004.13px;top:72.56px;width:2.89px;height:0.80px;background:#ce9178;opacity:.5;"></div>
<div style="left:1007.59px;top:72.56px;width:3.47px;height:0.80px;background:#ce9178;opacity:.5;"></div>
<div style="left:1000.08px;top:73.72px;width:5.78px;height:0.80px;background:#9cdcfe;opacity:.5;"></div>
<div style="left:1006.44px;top:73.72px;width:0.58px;height:0.80px;background:#d4d4d4;opacity:.5;"></div>
<div style="left:1007.59px;top:73.72px;width:3.47px;height:0.80px;background:#ce9178;opacity:.5;"></div>
<div style="left:1011.64px;top:73.72px;width:3.47px;height:0.80px;background:#ce9178;opacity:.5;"></div>
<div style="left:1000.08px;top:74.88px;width:3.47px;height:0.80px;background:#9cdcfe;opacity:.5;"></div>
<div style="left:1004.70px;top:74.88px;width:0.58px;height:0.80px;background:#d4d4d4;opacity:.5;"></div>
<div style="left:1005.86px;top:74.88px;width:3.47px;height:0.80px;background:#ce9178;opacity:.5;"></div>
<div style="left:1000.08px;top:76.03px;width:1.16px;height:0.80px;background:#808080;opacity:.5;"></div>
<div style="left:1001.24px;top:77.19px;width:0.58px;height:0.80px;background:#808080;opacity:.5;"></div>
<div style="left:1001.81px;top:77.19px;width:2.31px;height:0.80px;background:#4ec9b0;opacity:.5;"></div>
<div style="left:1000.08px;top:78.34px;width:2.31px;height:0.80px;background:#9cdcfe;opacity:.5;"></div>
<div style="left:1002.97px;top:78.34px;width:0.58px;height:0.80px;background:#d4d4d4;opacity:.5;"></div>
<div style="left:1004.13px;top:78.34px;width:4.05px;height:0.80px;background:#ce9178;opacity:.5;"></div>
<div style="left:1008.75px;top:78.34px;width:5.20px;height:0.80px;background:#ce9178;opacity:.5;"></div>
<div style="left:1000.08px;top:79.50px;width:5.78px;height:0.80px;background:#9cdcfe;opacity:.5;"></div>
<div style="left:1006.44px;top:79.50px;width:0.58px;height:0.80px;background:#d4d4d4;opacity:.5;"></div>
<div style="left:1007.59px;top:79.50px;width:3.47px;height:0.80px;background:#ce9178;opacity:.5;"></div>
<div style="left:1011.64px;top:79.50px;width:3.47px;height:0.80px;background:#ce9178;opacity:.5;"></div>
<div style="left:1000.08px;top:80.66px;width:3.47px;height:0.80px;background:#9cdcfe;opacity:.5;"></div>
<div style="left:1004.70px;top:80.66px;width:0.58px;height:0.80px;background:#d4d4d4;opacity:.5;"></div>
<div style="left:1005.86px;top:80.66px;width:3.47px;height:0.80px;background:#ce9178;opacity:.5;"></div>
<div style="left:1000.08px;top:81.81px;width:1.16px;height:0.80px;background:#808080;opacity:.5;"></div>
<div style="left:997.77px;top:84.12px;width:0.58px;height:0.80px;background:#569cd6;opacity:.5;"></div>
<div style="left:998.35px;top:84.12px;width:1.16px;height:0.80px;background:#6a9955;opacity:.5;"></div>
<div style="left:1000.08px;top:84.12px;width:1.73px;height:0.80px;background:#6a9955;opacity:.5;"></div>
<div style="left:1002.39px;top:84.12px;width:3.47px;height:0.80px;background:#6a9955;opacity:.5;"></div>
<div style="left:1006.44px;top:84.12px;width:17.56px;height:0.80px;background:#6a9955;opacity:.5;"></div>
<div style="left:997.77px;top:85.28px;width:1.73px;height:0.80px;background:#6a9955;opacity:.5;"></div>
<div style="left:1000.08px;top:85.28px;width:16.76px;height:0.80px;background:#6a9955;opacity:.5;"></div>
<div style="left:1017.42px;top:85.28px;width:4.62px;height:0.80px;background:#6a9955;opacity:.5;"></div>
<div style="left:1022.62px;top:85.28px;width:1.16px;height:0.80px;background:#6a9955;opacity:.5;"></div>
<div style="left:1023.78px;top:85.28px;width:0.22px;height:0.80px;background:#569cd6;opacity:.5;"></div>
<div style="left:996.61px;top:86.44px;width:3.47px;height:0.80px;background:#808080;opacity:.5;"></div>
<div style="left:995.46px;top:87.59px;width:1.16px;height:0.80px;background:#d4d4d4;opacity:.5;"></div>
<div style="left:994.30px;top:88.75px;width:0.58px;height:0.80px;background:#d4d4d4;opacity:.5;"></div>
<div style="left:994.30px;top:91.06px;width:3.47px;height:0.80px;background:#c586c0;opacity:.5;"></div>
<div style="left:998.35px;top:91.06px;width:4.05px;height:0.80px;background:#c586c0;opacity:.5;"></div>
<div style="left:1002.97px;top:91.06px;width:1.73px;height:0.80px;background:#9cdcfe;opacity:.5;"></div>
<div style="left:1004.70px;top:91.06px;width:0.58px;height:0.80px;background:#d4d4d4;opacity:.5;"></div>
<svg style="left:995.30px;top:388.20px;" width="5.00" height="5.00" viewBox="0 0 5 5"><path d="M0.3 0.9 L2.5 3.5 L4.7 0.9" fill="none" stroke="#c5c5c5" stroke-width="0.7"/></svg>
<svg style="left:1007.00px;top:386.20px;" width="8.20" height="7.60" viewBox="0 0 8.2 7.6"><rect x="0.5" y="0.5" width="7.2" height="6.6" rx="0.6" fill="none" stroke="#c5c5c5" stroke-width="0.75"/><path d="M4.1 0.5 V7.1" stroke="#c5c5c5" stroke-width="0.75"/></svg>
<div style="left:1022.30px;top:387.00px;width:2.00px;height:6.40px;background:#c5c5c5;opacity:.7"></div>
<div style="left:991.20px;top:389.60px;width:0.80px;height:0.80px;background:#c5c5c5;opacity:.7"></div>
<div style="left:635px;top:0;width:9px;height:409px;background:linear-gradient(90deg,rgba(0,0,0,0),rgba(0,0,0,.28));"></div>
<div style="left:990.5px;top:0;width:8px;height:409px;background:linear-gradient(270deg,rgba(0,0,0,0),rgba(0,0,0,.28));"></div>
<div style="left:643.60px;top:0.00px;width:347.50px;height:409.00px;background:#15171a;"></div>
<div style="left:644.20px;top:1.20px;width:346.30px;height:30.00px;background:#dee1e6;"></div>
<div style="left:644.20px;top:30.10px;width:346.30px;height:48.00px;background:#ffffff;"></div>
<div style="left:644.20px;top:78.30px;width:346.30px;height:330.70px;background:#ffffff;"></div>
<div style="left:644.20px;top:77.70px;width:346.30px;height:0.90px;background:#dcdee2;"></div>
<div style="left:648.9px;top:7.4px;width:161.6px;height:23.5px;background:#ffffff;border-radius:5px 5px 0 0;"></div>
<div style="left:644.9px;top:26.0px;width:4.3px;height:4.2px;background:#ffffff;"><div style="width:100%;height:100%;background:#dee1e6;border-radius:0 0 4px 0;"></div></div>
<div style="left:810.2px;top:26.0px;width:4.3px;height:4.2px;background:#ffffff;"><div style="width:100%;height:100%;background:#dee1e6;border-radius:0 0 0 4px;"></div></div>
<svg style="left:657.70px;top:13.70px;" width="11.20" height="11.20" viewBox="0 0 11.6 11.6"><rect width="11.6" height="11.6" rx="1.6" fill="#20232a"/><g fill="none" stroke="#61dafb" stroke-width="0.7"><ellipse cx="5.8" cy="5.8" rx="4.4" ry="1.7"/><ellipse cx="5.8" cy="5.8" rx="4.4" ry="1.7" transform="rotate(60 5.8 5.8)"/><ellipse cx="5.8" cy="5.8" rx="4.4" ry="1.7" transform="rotate(120 5.8 5.8)"/></g><circle cx="5.8" cy="5.8" r="0.9" fill="#61dafb"/></svg>
<span style="left:674.30px;top:15px;font-size:8.2px;line-height:9px;color:#3c4043;letter-spacing:-0.087px;">React App</span>
<svg style="left:796.70px;top:16.20px;" width="5.60" height="5.60" viewBox="0 0 5.6 5.6"><path d="M0.4 0.4 L5.2 5.2 M5.2 0.4 L0.4 5.2" stroke="#3c4043" stroke-width="1.2"/></svg>
<svg style="left:821.40px;top:14.60px;" width="8.40" height="8.40" viewBox="0 0 8.4 8.4"><path d="M4.2 0 V8.4 M0 4.2 H8.4" stroke="#3c4043" stroke-width="1.15"/></svg>
<svg style="left:875.30px;top:14.20px;" width="10.20" height="10.20" viewBox="0 0 10.2 10.2"><circle cx="5.1" cy="5.1" r="5.1" fill="#27292c"/><path d="M2.9 4 H7.3 L5.1 6.7 Z" fill="#ffffff"/></svg>
<div style="left:907.40px;top:11.30px;width:7.60px;height:0.70px;background:#4a4a4a;"></div>
<div style="left:938.2px;top:8.3px;width:7.6px;height:7.6px;border:0.7px solid #444;box-sizing:border-box;"></div>
<svg style="left:970.20px;top:8.00px;" width="7.80" height="7.80" viewBox="0 0 7.8 7.8"><path d="M0.3 0.3 L7.5 7.5 M7.5 0.3 L0.3 7.5" stroke="#444" stroke-width="0.72"/></svg>
<svg style="left:654.20px;top:39.40px;" width="9.00" height="8.00" viewBox="0 0 9 8"><path d="M8.8 4 H0.8 M4.2 0.4 L0.7 4 L4.2 7.6" fill="none" stroke="#b2b6bb" stroke-width="1.05"/></svg>
<svg style="left:676.20px;top:39.40px;" width="9.00" height="8.00" viewBox="0 0 9 8"><path d="M0.2 4 H8.2 M4.8 0.4 L8.3 4 L4.8 7.6" fill="none" stroke="#b2b6bb" stroke-width="1.05"/></svg>
<svg style="left:698.60px;top:38.80px;" width="9.40" height="9.40" viewBox="0 0 9.4 9.4"><path d="M8 3 A3.8 3.8 0 1 0 8.4 5.6" fill="none" stroke="#5f6368" stroke-width="1.05"/><path d="M8.9 0.6 V3.9 H5.6 Z" fill="#5f6368"/></svg>
<svg style="left:720.60px;top:38.80px;" width="9.80" height="9.20" viewBox="0 0 9.8 9.2"><path d="M0.6 4.9 L4.9 0.9 L9.2 4.9 M1.9 4 V8.6 H7.9 V4" fill="none" stroke="#5f6368" stroke-width="1.05" stroke-linejoin="miter"/></svg>
<div style="left:741px;top:33.8px;width:151.8px;height:19.4px;border-radius:9.7px;background:#f1f3f4;"></div>
<svg style="left:748.60px;top:39.10px;" width="8.60" height="8.60" viewBox="0 0 8.6 8.6"><circle cx="4.3" cy="4.3" r="3.7" fill="none" stroke="#4d5156" stroke-width="1"/><path d="M4.3 3.9 V6.4" stroke="#4d5156" stroke-width="1"/><circle cx="4.3" cy="2.5" r="0.6" fill="#4d5156"/></svg>
<span style="left:764.60px;top:38px;font-size:9.7px;line-height:11px;color:#202124;letter-spacing:-0.010px;"><span style="color:#202124">localhost</span><span style="color:#70757a">:3000</span></span>
<svg style="left:875.60px;top:38.30px;" width="10.40" height="10.00" viewBox="0 0 9.4 9"><path d="M4.7 0.9 L5.85 3.5 L8.7 3.75 L6.55 5.6 L7.2 8.4 L4.7 6.95 L2.2 8.4 L2.85 5.6 L0.7 3.75 L3.55 3.5 Z" fill="none" stroke="#50545a" stroke-width="0.95" stroke-linejoin="round"/></svg>
<svg style="left:903.20px;top:38.60px;" width="10.00" height="9.80" viewBox="0 0 10 9.8"><path d="M4 0.4 A1.2 1.2 0 0 1 6.3 0.9 V1.6 H8.6 V4 H9 A1.25 1.25 0 0 1 9 6.5 H8.6 V9.4 H5.9 V8.8 A1.2 1.2 0 0 0 3.5 8.8 V9.4 H0.8 V6.6 H1.3 A1.25 1.25 0 0 0 1.3 4.1 H0.8 V1.6 H3.9 Z" fill="#5f6368"/></svg>
<svg style="left:925.40px;top:39.40px;" width="10.60" height="8.40" viewBox="0 0 10.6 8.4"><path d="M0.2 1 H6.6 M0.2 3.6 H6.6 M0.2 6.2 H4" stroke="#5f6368" stroke-width="0.95" fill="none"/><path d="M8.4 0.6 V6.2 M8.4 1 H10.4" stroke="#5f6368" stroke-width="0.95" fill="none"/><circle cx="7.4" cy="6.4" r="1.3" fill="#5f6368"/></svg>
<div style="left:945.3px;top:35.7px;width:15.4px;height:15.4px;border-radius:8px;background:#a13abf;"></div>
<span style="left:950.60px;top:40px;font-size:6.6px;line-height:7px;color:#ffffff;font-weight:700;">H</span>
<div style="left:974.1px;top:39.1px;width:2px;height:2px;border-radius:1px;background:#5f6368;"></div>
<div style="left:974.1px;top:42.6px;width:2px;height:2px;border-radius:1px;background:#5f6368;"></div>
<div style="left:974.1px;top:46.1px;width:2px;height:2px;border-radius:1px;background:#5f6368;"></div>
<div style="left:654.60px;top:61.00px;width:2.40px;height:2.40px;background:#ea4335;border-radius:0.6px;"></div>
<div style="left:658.00px;top:61.00px;width:2.40px;height:2.40px;background:#ea4335;border-radius:0.6px;"></div>
<div style="left:661.40px;top:61.00px;width:2.40px;height:2.40px;background:#fbbc04;border-radius:0.6px;"></div>
<div style="left:654.60px;top:64.40px;width:2.40px;height:2.40px;background:#34a853;border-radius:0.6px;"></div>
<div style="left:658.00px;top:64.40px;width:2.40px;height:2.40px;background:#4285f4;border-radius:0.6px;"></div>
<div style="left:661.40px;top:64.40px;width:2.40px;height:2.40px;background:#fbbc04;border-radius:0.6px;"></div>
<div style="left:654.60px;top:67.80px;width:2.40px;height:2.40px;background:#34a853;border-radius:0.6px;"></div>
<div style="left:658.00px;top:67.80px;width:2.40px;height:2.40px;background:#f9ab00;border-radius:0.6px;"></div>
<div style="left:661.40px;top:67.80px;width:2.40px;height:2.40px;background:#fbbc04;border-radius:0.6px;"></div>
<span style="left:670.30px;top:62px;font-size:8.2px;line-height:9px;color:#33373b;letter-spacing:-0.024px;">Uygulamalar</span>
<span style="left:796.40px;top:60px;font-size:8.8px;line-height:10px;color:#3c4043;font-weight:700;">»</span>
<div style="left:809.20px;top:59.80px;width:0.60px;height:10.80px;background:#d5d8dc;"></div>
<svg style="left:817.00px;top:60.80px;" width="8.80" height="8.80" viewBox="0 0 8.8 8.8"><path d="M0.6 0.4 H6.2 L8.2 1.6 V8.4 H0.6 Z" fill="#fcdc7e"/><path d="M0.6 0.4 H1.8 V8.4 H0.6 Z" fill="#f7c955"/></svg>
<span style="left:833.00px;top:62px;font-size:8.2px;line-height:9px;color:#33373b;letter-spacing:-0.002px;">Diğer yer işaretleri</span>
<div style="left:906.90px;top:59.80px;width:0.60px;height:10.80px;background:#d5d8dc;"></div>
<svg style="left:915.30px;top:60.60px;" width="9.80" height="9.40" viewBox="0 0 9.8 9.4"><rect x="0.5" y="0.5" width="8.8" height="8.4" rx="0.6" fill="none" stroke="#54585d" stroke-width="1"/><path d="M2 2.8 H3.3 M4.4 2.8 H7.8 M2 4.7 H3.3 M4.4 4.7 H7.8 M2 6.6 H3.3 M4.4 6.6 H7.8" stroke="#54585d" stroke-width="0.85"/></svg>
<span style="left:931.50px;top:62px;font-size:8.2px;line-height:9px;color:#33373b;letter-spacing:-0.049px;">Okuma listesi</span>
<span style="left:655.00px;top:80px;font-size:16.4px;line-height:18px;color:#212529;letter-spacing:-0.470px;-webkit-text-stroke:0.55px #212529;">APP COMPONENT</span>
<span style="left:655.00px;top:106px;font-size:16.4px;line-height:18px;color:#212529;letter-spacing:-0.738px;transform:scaleX(0.9115);transform-origin:0 0;-webkit-text-stroke:0.55px #212529;">EROL</span>
<span style="left:655.00px;top:131px;font-size:16.4px;line-height:18px;color:#212529;letter-spacing:0.195px;-webkit-text-stroke:0.55px #212529;">kullnıcı kaytlı</span>
<span style="left:654.50px;top:162px;font-size:19.8px;line-height:22px;color:#212529;letter-spacing:0.002px;-webkit-text-stroke:0.55px #212529;">Erol App</span>
<div style="left:654.30px;top:195.10px;width:325.70px;height:0.80px;background:#eaecee;"></div>
<div style="left:669.9px;top:213.80px;width:3.8px;height:3.8px;border-radius:2px;background:#212529;"></div>
<span style="left:682.00px;top:210px;font-size:11.5px;line-height:12px;color:#212529;letter-spacing:-0.291px;">İsim : Erol Akgül</span>
<div style="left:669.9px;top:230.40px;width:3.8px;height:3.8px;border-radius:2px;background:#212529;"></div>
<span style="left:682.00px;top:226px;font-size:11.5px;line-height:12px;color:#212529;letter-spacing:-0.288px;">Departman : Bilgi İşlem</span>
<div style="left:669.9px;top:246.90px;width:3.8px;height:3.8px;border-radius:2px;background:#212529;"></div>
<span style="left:682.00px;top:243px;font-size:11.5px;line-height:12px;color:#212529;letter-spacing:-0.482px;">Maaş : 5000</span>
<div style="left:669.9px;top:274.80px;width:3.8px;height:3.8px;border-radius:2px;background:#212529;"></div>
<span style="left:682.00px;top:271px;font-size:11.5px;line-height:12px;color:#212529;letter-spacing:-0.359px;">İsim : Gürkan Alavanda</span>
<div style="left:669.9px;top:291.30px;width:3.8px;height:3.8px;border-radius:2px;background:#212529;"></div>
<span style="left:682.00px;top:287px;font-size:11.5px;line-height:12px;color:#212529;letter-spacing:-0.288px;">Departman : Bilgi İşlem</span>
<div style="left:669.9px;top:307.80px;width:3.8px;height:3.8px;border-radius:2px;background:#212529;"></div>
<span style="left:682.00px;top:304px;font-size:11.5px;line-height:12px;color:#212529;letter-spacing:-0.482px;">Maaş : 4999</span>
</body></html>
